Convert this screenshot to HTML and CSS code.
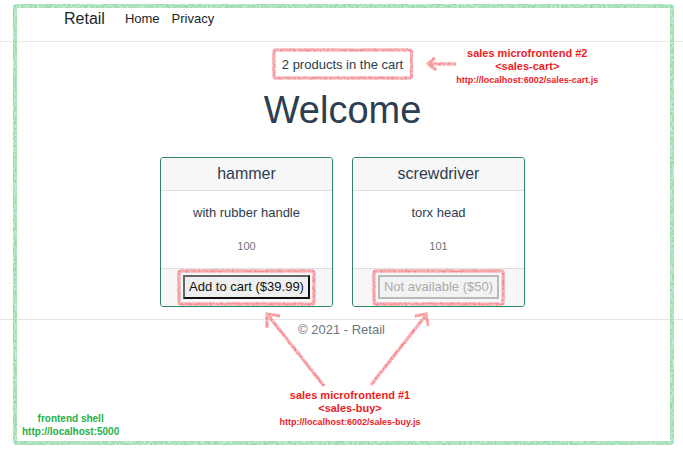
FILE: index.html
```html
<!DOCTYPE html>
<html lang="en">
<head>
<meta charset="utf-8">
<meta name="viewport" content="width=device-width, initial-scale=1">
<title>Retail</title>
<link rel="stylesheet" href="styles.css">
</head>
<body>
<svg class="defs" aria-hidden="true">
  <filter id="crayon" filterUnits="userSpaceOnUse" x="-10" y="-10" width="3000" height="3000">
    <feTurbulence type="fractalNoise" baseFrequency="0.45" numOctaves="2" seed="4" result="noise"/>
    <feColorMatrix in="noise" type="matrix" values="0 0 0 0 0  0 0 0 0 0  0 0 0 0 0  2.4 0 0 0 -0.7" result="grain"/>
    <feDisplacementMap in="SourceGraphic" in2="noise" scale="1" xChannelSelector="R" yChannelSelector="G" result="rough"/>
    <feComposite in="rough" in2="grain" operator="in" result="speckled"/>
    <feComponentTransfer in="rough" result="wash"><feFuncA type="linear" slope="0.5"/></feComponentTransfer>
    <feMerge><feMergeNode in="wash"/><feMergeNode in="speckled"/></feMerge>
  </filter>
</svg>

<header class="navbar">
  <a class="brand" href="#">Retail</a>
  <nav class="links">
    <a href="#">Home</a>
    <a href="#">Privacy</a>
  </nav>
</header>

<main>
  <div class="cart">
    <svg class="outline" aria-hidden="true"><rect width="100%" height="100%" rx="2"/></svg>
    2 products in the cart
    <div class="note cart-note">
      <svg class="arrow" width="30" height="18" viewBox="0 0 30 18" aria-hidden="true"><path d="M30 9H2M9 3L2 9l8 6"/></svg>
      <p>sales microfrontend #2<br>&lt;sales-cart&gt;<br><small>http://localhost:6002/sales-cart.js</small></p>
    </div>
  </div>
  <h1>Welcome</h1>
  <div class="products">
    <article class="card">
      <h2>hammer</h2>
      <div class="details"><p>with rubber handle</p><small>100</small></div>
      <div class="buy">
        <div class="buy-box">
          <svg class="outline" aria-hidden="true"><rect width="100%" height="100%" rx="2"/></svg>
          <button type="button">Add to cart ($39.99)</button>
        </div>
      </div>
    </article>
    <article class="card">
      <h2>screwdriver</h2>
      <div class="details"><p>torx head</p><small>101</small></div>
      <div class="buy">
        <div class="buy-box">
          <svg class="outline" aria-hidden="true"><rect width="100%" height="100%" rx="2"/></svg>
          <button type="button" disabled>Not available ($50)</button>
        </div>
      </div>
    </article>
    <div class="note buy-note">
      <svg class="arrow" width="180" height="78" viewBox="0 0 180 78" aria-hidden="true">
        <path d="M67 75L10 3M23 5L10 3v14M114 74L169 4M158 5l11-2 2 12"/>
      </svg>
      <p>sales microfrontend #1<br>&lt;sales-buy&gt;<br><small>http://localhost:6002/sales-buy.js</small></p>
    </div>
  </div>
</main>

<footer>© 2021 - Retail</footer>

<div class="shell">
  <svg class="outline" aria-hidden="true"><rect width="100%" height="100%" rx="2"/></svg>
  <p>frontend shell<br>http://localhost:5000</p>
</div>
</body>
</html>
```
FILE: styles.css
```css
* {
  box-sizing: border-box;
}

body {
  position: relative;
  min-height: 100vh;
  margin: 0;
  background: #fff;
  color: #2c3e50;
  font: 13px/20px "Liberation Sans", Arial, sans-serif;
}

h1,
h2,
p {
  margin: 0;
  font-weight: 400;
}

.defs {
  position: absolute;
  width: 0;
  height: 0;
}

.navbar {
  display: flex;
  align-items: center;
  gap: 20px;
  height: 42px;
  padding: 0 64px 4px;
  border-bottom: 1px solid #e9e9e9;
}

.navbar a {
  color: #212529;
  text-decoration: none;
}

.navbar .brand {
  font-size: 16px;
}

.links {
  display: flex;
  gap: 12px;
}

main {
  display: flex;
  flex-direction: column;
  align-items: center;
  padding: 6px 0 12px 2px;
}

.cart {
  position: relative;
  padding: 7px 10px 5px;
}

.outline {
  position: absolute;
  inset: 2px;
  width: calc(100% - 4px);
  height: calc(100% - 4px);
  overflow: visible;
  pointer-events: none;
}

.outline rect,
.arrow path {
  fill: none;
  stroke: #f5868c;
  stroke-width: 3;
  filter: url(#crayon);
}

h1 {
  padding: 7px 0 24px;
  font-size: 38px;
  line-height: 46px;
}

.products {
  position: relative;
  display: grid;
  grid-template-columns: 173px 173px;
  gap: 19px;
  text-align: center;
}

.card {
  border: 1px solid #2e8b60;
  border-radius: 3px;
}

.card h2 {
  padding: 6px 0;
  border-bottom: 1px solid #dfdfdf;
  border-radius: 3px 3px 0 0;
  background: #f7f7f7;
  font-size: 16px;
  line-height: 20px;
}

.details {
  padding: 12px 0;
}

.details p {
  padding-bottom: 13px;
}

.details small {
  display: block;
  color: #6c757d;
  font-size: 11px;
}

.buy {
  display: flex;
  justify-content: center;
  border-top: 1px solid #dfdfdf;
  border-radius: 0 0 3px 3px;
  background: #f7f7f7;
}

.buy-box {
  position: relative;
  padding: 6px 6px 7px;
}

button {
  display: block;
  height: 24px;
  padding: 0 4px;
  border: 2px solid;
  border-color: #666 #111 #111 #666;
  background: #efefef;
  color: #111;
  font: inherit;
}

button:disabled {
  border-color: #b9b9b9;
  background: #f3f3f3;
  color: #aaa;
}

.note {
  position: absolute;
  color: #ed1c24;
  font-size: 11px;
  line-height: 13px;
  text-align: center;
  white-space: nowrap;
}

.note p,
.shell p {
  font-weight: 700;
}

.note small {
  font-size: 9px;
}

.arrow {
  display: block;
  overflow: visible;
}

.cart-note {
  top: -1px;
  left: calc(100% + 13px);
  display: flex;
}

.cart-note .arrow {
  margin-top: 8px;
}

.buy-note {
  top: calc(100% + 4px);
  left: 97px;
  width: 186px;
}

footer {
  border-top: 1px solid #e4e4e4;
  color: #6c757d;
  text-align: center;
}

.shell {
  position: absolute;
  inset: 4px 9px 9px 13px;
  display: flex;
  align-items: flex-end;
  padding: 0 9px 7px;
  color: #22b14c;
  font-size: 10px;
  line-height: 13px;
  text-align: center;
  pointer-events: none;
}

.shell .outline rect {
  stroke: #93d9a9;
  stroke-width: 4;
}
```
